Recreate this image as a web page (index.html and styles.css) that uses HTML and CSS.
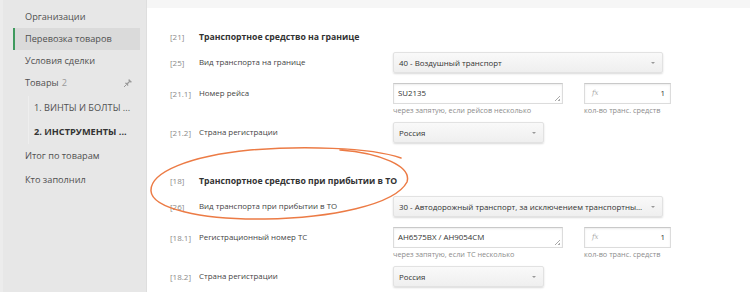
FILE: index.html
```html
<!DOCTYPE html>
<html lang="ru">
  <head>
    <meta charset="UTF-8" />
    <meta name="viewport" content="width=device-width, initial-scale=1.0" />
    <title>Перевозка товаров</title>
    <link rel="stylesheet" href="styles.css">
  </head>
  <body>
    <div class="app">
      <aside class="sidebar">
        <ul class="menu">
          <li>Организации</li>
          <li class="active">Перевозка товаров</li>
          <li>Условия сделки</li>
          <li class="goods">
            Товары <span class="count">2</span>
            <svg class="pin" width="10" height="10" viewBox="0 0 10 10">
              <path d="M6 1 L9 4 L8 4.6 L6.6 4.2 L5 6 L5.4 7.4 L4.8 8 L2 5.2 L2.6 4.6 L4 5 L5.8 3.4 L5.4 2 Z" fill="#9a9a9a" />
              <path d="M3.2 6.8 L1 9" stroke="#9a9a9a" stroke-width="1" />
            </svg>
          </li>
          <li class="sub">
            <ul>
              <li>1. ВИНТЫ И БОЛТЫ ...</li>
              <li class="current">2. ИНСТРУМЕНТЫ ...</li>
            </ul>
          </li>
          <li>Итог по товарам</li>
          <li>Кто заполнил</li>
        </ul>
      </aside>

      <main class="form">
        <div class="topbar"></div>

        <section class="block">
          <div class="block-title"><span class="code">[21]</span><h2>Транспортное средство на границе</h2></div>
          <div class="row">
            <span class="code">[25]</span>
            <span class="label">Вид транспорта на границе</span>
            <div class="select wide">40 - Воздушный транспорт</div>
          </div>
          <div class="row">
            <span class="code">[21.1]</span>
            <span class="label">Номер рейса</span>
            <div class="pair">
              <div class="field">
                <div class="textarea">SU2135</div>
                <p class="hint">через запятую, если рейсов несколько</p>
              </div>
              <div class="field">
                <div class="number"><i>fx</i><span>1</span></div>
                <p class="hint">кол-во транс. средств</p>
              </div>
            </div>
          </div>
          <div class="row">
            <span class="code">[21.2]</span>
            <span class="label">Страна регистрации</span>
            <div class="select short">Россия</div>
          </div>
        </section>

        <section class="block">
          <div class="block-title"><span class="code">[18]</span><h2>Транспортное средство при прибытии в ТО</h2></div>
          <div class="row">
            <span class="code">[26]</span>
            <span class="label">Вид транспорта при прибытии в ТО</span>
            <div class="select wide">30 - Автодорожный транспорт, за исключением транспортных...</div>
          </div>
          <div class="row">
            <span class="code">[18.1]</span>
            <span class="label">Регистрационный номер ТС</span>
            <div class="pair">
              <div class="field">
                <div class="textarea">AH6575BX / AH9054CM</div>
                <p class="hint">через запятую, если ТС несколько</p>
              </div>
              <div class="field">
                <div class="number"><i>fx</i><span>1</span></div>
                <p class="hint">кол-во транс. средств</p>
              </div>
            </div>
          </div>
          <div class="row">
            <span class="code">[18.2]</span>
            <span class="label">Страна регистрации</span>
            <div class="select short">Россия</div>
          </div>
        </section>
      </main>

      <svg class="mark" width="750" height="292" viewBox="0 0 750 292">
        <path d="M401 158 C370 147 300 146 250 150 C190 156 150 172 151 191 C152 208 200 220 265 219 C330 218 395 205 407 182 C412 166 380 153 340 150" fill="none" stroke="#ec7b45" stroke-width="1.5" stroke-linecap="round" />
      </svg>
    </div>
  </body>
</html>
```

FILE: styles.css
```css
* {
  box-sizing: border-box;
}
body {
  margin: 0;
  font-family: "Open Sans", "Noto Sans", sans-serif;
  color: #333;
  background: #fff;
}
.app {
  display: flex;
  height: 292px;
  position: relative;
  overflow: hidden;
}

/* левое меню */
.sidebar {
  width: 147px;
  flex: none;
  background: #e7e7e7;
  border-left: 3px solid #ececec;
  border-right: 1px solid #dedede;
  padding-top: 6px;
}
.menu,
.menu ul {
  list-style: none;
  margin: 0;
  padding: 0;
}
.menu li {
  height: 22px;
  line-height: 22px;
  padding-left: 22px;
  font-size: 9.2px;
  color: #505050;
  white-space: nowrap;
}
.menu .active {
  margin: 0 6px 0 10px;
  padding-left: 10px;
  border-left: 2px solid #3f9a5e;
  background: #dadada;
}
.goods {
  display: flex;
  align-items: center;
  gap: 3px;
  padding-right: 13px;
}
.count {
  color: #999;
}
.pin {
  margin-left: auto;
}
.menu .sub {
  height: auto;
  padding: 2px 0 0 25px;
}
.sub ul {
  border-left: 1px solid #eeeeee;
}
.sub ul li {
  height: 24px;
  line-height: 24px;
  padding-left: 5px;
}
.menu .current {
  font-weight: 700;
  color: #333;
}
.sub + li,
.sub + li + li {
  height: 24px !important;
  line-height: 24px !important;
}

/* форма */
.form {
  flex: 1;
  padding-left: 23px;
}
.topbar {
  height: 8px;
  margin-left: -23px;
  background: #f6f6f6;
}
.block-title {
  display: grid;
  grid-template-columns: 29px auto;
  height: 20px;
  line-height: 20px;
  margin-top: 19px;
}
.block + .block .block-title {
  margin-top: 28px;
}
.block-title h2 {
  margin: 0;
  font-size: 8.7px;
  font-weight: 700;
  color: #333;
}
.code {
  font-size: 8px;
  color: #8a8a8a;
}
.row {
  display: grid;
  grid-template-columns: 29px 194px 1fr;
  align-items: start;
  margin-top: 5px;
}
.row + .row {
  margin-top: 10px;
}
.row:last-child {
  margin-top: 7px;
}
.row .code,
.label {
  line-height: 21px;
}
.label {
  font-size: 7.9px;
  color: #444;
}
.select {
  position: relative;
  height: 21px;
  line-height: 21px;
  padding: 0 16px 0 5px;
  font-size: 7.9px;
  color: #333;
  background: linear-gradient(#f9f9f9, #efefef);
  border: 1px solid #e2e2e2;
  border-radius: 2px;
  box-shadow: 0 1px 2px rgba(0, 0, 0, 0.15);
  white-space: nowrap;
  overflow: hidden;
  text-overflow: ellipsis;
}
.select::after {
  content: "";
  position: absolute;
  right: 7px;
  top: 9px;
  border: 2px solid transparent;
  border-top: 2px solid #999;
}
.wide {
  width: 270px;
}
.short {
  width: 151px;
}
.pair {
  display: flex;
  gap: 21px;
}
.textarea,
.number {
  height: 21px;
  line-height: 19px;
  font-size: 7.9px;
  color: #333;
  background: #fff;
  border: 1px solid #dcdcdc;
  border-top-color: #c9c9c9;
  box-shadow: inset 0 1px 2px rgba(0, 0, 0, 0.08);
}
.textarea {
  position: relative;
  width: 170px;
  padding-left: 4px;
}
.textarea::after {
  content: "";
  position: absolute;
  right: 2px;
  bottom: 2px;
  width: 5px;
  height: 5px;
  background: linear-gradient(135deg, transparent 45%, #aaa 45%, #aaa 55%, transparent 55%, transparent 75%, #aaa 75%);
}
.number {
  display: flex;
  justify-content: space-between;
  width: 87px;
  padding: 0 5px 0 7px;
}
.number i {
  font-family: "DejaVu Serif", serif;
  font-size: 7px;
  color: #aaa;
}
.hint {
  margin: 1px 0 0;
  font-size: 7.3px;
  color: #8c8c8c;
  line-height: 10px;
}

.mark {
  position: absolute;
  left: 0;
  top: 0;
  pointer-events: none;
}
```
